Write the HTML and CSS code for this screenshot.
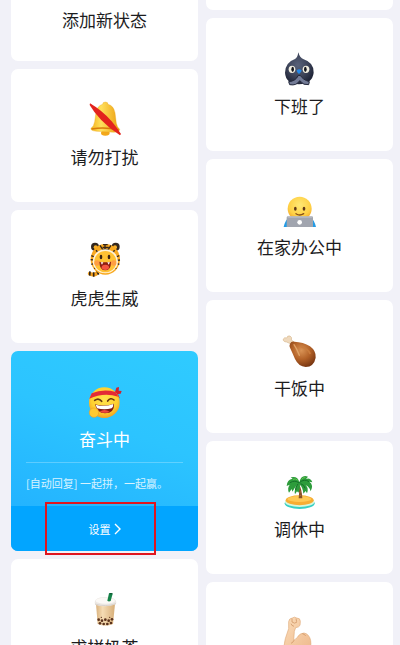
FILE: index.html
```html
<!DOCTYPE html>
<html lang="zh-CN">
<head>
    <meta charset="UTF-8">
    <meta name="viewport" content="width=device-width, initial-scale=1.0">
    <title>添加新状态</title>
    <link rel="stylesheet" href="styles.css">
</head>
<body>
    <main class="status-grid">
        <div class="column">
            <button type="button" class="card card-add">
                <span class="card-title">添加新状态</span>
            </button>

            <button type="button" class="card">
                <!-- bell, muted -->
                <svg class="icon" viewBox="18 21 108 108" aria-hidden="true">
                    <defs>
                        <linearGradient id="bell" x1="0" y1="0" x2="1" y2="0">
                            <stop offset="0" stop-color="#f5b21c"/>
                            <stop offset=".35" stop-color="#ffe05c"/>
                            <stop offset="1" stop-color="#eb9d0e"/>
                        </linearGradient>
                    </defs>
                    <ellipse cx="73" cy="117" rx="13" ry="8" fill="#f3a81a"/>
                    <path d="M65 31 Q65 24 73 24 Q81 24 81 31 Q98 35 102 56 L106 88 Q108 99 116 106 Q116 114 98 115 L46 112 Q28 110 30 103 Q39 96 41 83 L45 55 Q49 35 65 31Z" fill="url(#bell)" stroke="#eaa51c" stroke-width="1"/>
                    <path d="M32 105 Q72 98 113 108" fill="none" stroke="#d87c0c" stroke-width="4"/>
                    <path d="M27 28 Q64 50 92 82 Q107 100 120 120 L117 124 Q86 104 60 77 Q38 54 26 33Z" fill="#e3231d"/>
                </svg>
                <span class="card-title">请勿打扰</span>
            </button>

            <button type="button" class="card">
                <!-- tiger hood face -->
                <svg class="icon" viewBox="18 24 108 108" aria-hidden="true">
                    <path d="M51 113 Q44 127 26 119" fill="none" stroke="#f5a11b" stroke-width="11" stroke-linecap="round"/>
                    <path d="M27 112l-1 13M38 115v13M47 110l6 12" stroke="#2d2117" stroke-width="5"/>
                    <circle cx="42" cy="38" r="12" fill="#32271f"/>
                    <circle cx="104" cy="38" r="12" fill="#32271f"/>
                    <circle cx="44" cy="40" r="6" fill="#f8b12b"/>
                    <circle cx="102" cy="40" r="6" fill="#f8b12b"/>
                    <ellipse cx="73" cy="76" rx="44" ry="46" fill="#f9a920"/>
                    <path d="M57 34l8 12h17l8-12M66 32h14M65 40h18M72 31v13M31 65l10 4M29 77l10 1M31 91l9-3M115 65l-10 4M117 78l-10 1M115 91l-9-3M45 49l7 7M101 49l-7 7M40 104l7-6M106 104l-7-6" fill="none" stroke="#33251a" stroke-width="4"/>
                    <ellipse cx="73" cy="82" rx="38" ry="36" fill="#fff4dc"/>
                    <ellipse cx="73" cy="83" rx="33" ry="32" fill="#ffc234"/>
                    <circle cx="48" cy="87" r="8" fill="#ff9e43"/>
                    <circle cx="98" cy="87" r="8" fill="#ff9e43"/>
                    <ellipse cx="60" cy="69" rx="4" ry="7" fill="#3b2414"/>
                    <ellipse cx="84" cy="69" rx="4" ry="7" fill="#3b2414"/>
                    <path d="M55 83 Q73 86 90 83 Q90 109 73 109 Q56 109 55 83Z" fill="#8f1d12"/>
                    <ellipse cx="73" cy="100" rx="11" ry="8" fill="#f45440"/>
                    <path d="M59 85h8l-4 7zM79 85h8l-4 7z" fill="#fff"/>
                </svg>
                <span class="card-title">虎虎生威</span>
            </button>

            <section class="card card-active">
                <div class="active-body">
                    <!-- laughing face with headband -->
                    <svg class="icon" viewBox="20 15 108 108" aria-hidden="true">
                        <defs>
                            <radialGradient id="face" cx=".5" cy=".4" r=".6">
                                <stop offset="0" stop-color="#ffe34d"/>
                                <stop offset=".7" stop-color="#ffd02f"/>
                                <stop offset="1" stop-color="#f0a022"/>
                            </radialGradient>
                        </defs>
                        <path d="M104 42l4-13 8-2-1 11 9 1-3 8-8 1 5 12-8 3-10-13z" fill="#d3202e"/>
                        <circle cx="72" cy="74" r="46" fill="url(#face)"/>
                        <path d="M34 46 Q68 32 106 42 L114 56 Q70 42 27 62Z" fill="#e32a36"/>
                        <path d="M43 67 Q55 58 64 70M82 69 Q91 57 101 66" fill="none" stroke="#68360e" stroke-width="5" stroke-linecap="round"/>
                        <path d="M44 79 Q71 87 101 77 Q103 105 74 106 Q50 106 44 79Z" fill="#801c12"/>
                        <path d="M46 80 Q72 88 99 78 Q99 87 94 91 Q72 97 50 91Z" fill="#fff"/>
                        <path d="M58 101 Q72 91 88 101 Q74 108 58 101Z" fill="#ee483e"/>
                        <circle cx="41" cy="104" r="14" fill="#ffca32" stroke="#ef9e25" stroke-width="2"/>
                    </svg>
                    <h2 class="card-title">奋斗中</h2>
                    <p class="reply">[自动回复] 一起拼，一起赢。</p>
                </div>
                <div class="active-footer">
                    <button type="button" class="settings-btn">
                        设置
                        <svg class="chevron" viewBox="0 0 7 12" aria-hidden="true">
                            <path d="M1 1l5 5-5 5" fill="none" stroke="#fff" stroke-width="1.4"/>
                        </svg>
                    </button>
                    <span class="highlight"></span>
                </div>
            </section>

            <button type="button" class="card">
                <!-- bubble tea -->
                <svg class="icon" viewBox="48 33 108 108" aria-hidden="true">
                    <defs>
                        <linearGradient id="tea" x1="0" y1="0" x2="1" y2="0">
                            <stop offset="0" stop-color="#d9b17d"/>
                            <stop offset=".35" stop-color="#f5dcb4"/>
                            <stop offset="1" stop-color="#d7ae78"/>
                        </linearGradient>
                    </defs>
                    <path d="M75 72h57l-6 60q-23 10-46 0z" fill="url(#tea)"/>
                    <g fill="#5a321d">
                        <circle cx="83" cy="119" r="4"/><circle cx="93" cy="122" r="4"/><circle cx="103" cy="119" r="4"/>
                        <circle cx="113" cy="122" r="4"/><circle cx="123" cy="118" r="4"/><circle cx="87" cy="130" r="4"/>
                        <circle cx="98" cy="132" r="4"/><circle cx="109" cy="132" r="4"/><circle cx="120" cy="129" r="4"/>
                        <circle cx="91" cy="112" r="2"/><circle cx="116" cy="112" r="2"/>
                    </g>
                    <path d="M71 66 Q73 51 103 52 Q134 51 136 66 L135 73 Q103 84 72 74Z" fill="#ece8e4"/>
                    <ellipse cx="103" cy="62" rx="29" ry="9" fill="#fbf9f6"/>
                    <path d="M72 72 Q103 82 135 71" fill="none" stroke="#cfc7bf" stroke-width="2"/>
                    <path d="M114 40 Q120 37 125 41 L119 63 Q113 66 109 62Z" fill="#16834a"/>
                    <ellipse cx="120" cy="41" rx="5" ry="2" fill="#0b5730"/>
                </svg>
                <span class="card-title">求拼奶茶</span>
            </button>
        </div>

        <div class="column">
            <div class="card card-end"></div>

            <button type="button" class="card">
                <!-- dark round bird -->
                <svg class="icon" viewBox="20 15 108 108" aria-hidden="true">
                    <defs>
                        <radialGradient id="bird" cx=".45" cy=".4" r=".6">
                            <stop offset="0" stop-color="#59627a"/>
                            <stop offset=".6" stop-color="#3d4459"/>
                            <stop offset="1" stop-color="#202538"/>
                        </radialGradient>
                    </defs>
                    <path d="M69 22 Q73 38 85 43 Q116 53 115 83 Q111 116 71 118 Q31 116 29 83 Q30 52 59 42 Q67 37 69 22Z" fill="url(#bird)"/>
                    <ellipse cx="50" cy="73" rx="10" ry="11" fill="#f1eee0"/>
                    <ellipse cx="92" cy="73" rx="10" ry="11" fill="#f1eee0"/>
                    <ellipse cx="52" cy="73" rx="4" ry="8" fill="#14161e"/>
                    <ellipse cx="90" cy="73" rx="4" ry="8" fill="#14161e"/>
                    <path d="M64 76 Q71 70 79 76 Q78 83 71 87 Q64 82 64 76Z" fill="#2689e7"/>
                    <path d="M68 92 Q62 108 40 110 L43 119 Q64 123 73 107 Q85 122 100 119 L102 110 Q82 104 75 91Z" fill="#737b96" stroke="#24293c" stroke-width="3"/>
                </svg>
                <span class="card-title">下班了</span>
            </button>

            <button type="button" class="card">
                <!-- face behind laptop -->
                <svg class="icon" viewBox="20 3 108 108" aria-hidden="true">
                    <defs>
                        <radialGradient id="smile" cx=".5" cy=".35" r=".65">
                            <stop offset="0" stop-color="#ffe875"/>
                            <stop offset=".7" stop-color="#ffd044"/>
                            <stop offset="1" stop-color="#f2a62d"/>
                        </radialGradient>
                    </defs>
                    <path d="M40 83 Q29 91 25 111 L122 111 Q117 90 107 83Z" fill="#239be5"/>
                    <circle cx="73" cy="56" r="36" fill="url(#smile)"/>
                    <ellipse cx="60" cy="56" rx="4" ry="6" fill="#613816"/>
                    <ellipse cx="86" cy="56" rx="4" ry="6" fill="#613816"/>
                    <path d="M62 71 Q73 79 85 71" fill="none" stroke="#895016" stroke-width="4" stroke-linecap="round"/>
                    <rect x="34" y="79" width="79" height="34" rx="4" fill="#a1a5af"/>
                    <path d="M37 81h73" stroke="#c4c7d0" stroke-width="3"/>
                    <circle cx="73" cy="97" r="7" fill="#fff"/>
                </svg>
                <span class="card-title">在家办公中</span>
            </button>

            <button type="button" class="card">
                <!-- drumstick -->
                <svg class="icon" viewBox="20 12 108 108" aria-hidden="true">
                    <defs>
                        <radialGradient id="meat" cx=".45" cy=".35" r=".7">
                            <stop offset="0" stop-color="#d99355"/>
                            <stop offset=".5" stop-color="#b36228"/>
                            <stop offset="1" stop-color="#743310"/>
                        </radialGradient>
                    </defs>
                    <path d="M47 48 L34 42 Q22 41 24 33 Q27 27 34 30 Q36 22 44 24 Q51 27 48 36 L60 45Z" fill="#efd9bd" stroke="#d8b991" stroke-width="2"/>
                    <path d="M44 47 Q48 39 57 41 Q84 42 104 55 Q123 69 121 89 Q116 116 91 117 Q70 116 59 93 Q52 76 44 59 Q41 53 44 47Z" fill="url(#meat)"/>
                    <path d="M56 50 Q64 61 72 82" fill="none" stroke="#e0a468" stroke-width="4" stroke-linecap="round"/>
                    <path d="M79 57 Q98 63 104 76" fill="none" stroke="#c97c3d" stroke-width="5" stroke-linecap="round"/>
                </svg>
                <span class="card-title">干饭中</span>
            </button>

            <button type="button" class="card">
                <!-- palm island -->
                <svg class="icon" viewBox="20 15 108 108" aria-hidden="true">
                    <ellipse cx="73" cy="106" rx="45" ry="17" fill="#36cfc3"/>
                    <ellipse cx="73" cy="102" rx="44" ry="15" fill="#d5f7df"/>
                    <ellipse cx="73" cy="97" rx="42" ry="15" fill="#f7ad32"/>
                    <ellipse cx="72" cy="93" rx="36" ry="9" fill="#ffc954"/>
                    <path d="M71 48 Q80 65 81 91 L70 91 Q74 67 66 51Z" fill="#875027"/>
                    <path d="M75 62l-5 3M77 71l-5 3M78 81l-6 3" stroke="#b97b45" stroke-width="2"/>
                    <path d="M72 43 Q67 22 46 28 L52 32 Q35 34 34 54 L43 50 Q35 61 41 74 L49 63 L51 71 Q59 55 67 50 Q55 62 59 79 L65 70 L69 74 Q76 60 73 50 Q82 56 84 77 L91 69 L95 76 Q101 60 91 52 Q102 56 106 70 Q116 51 102 41 L111 43 Q105 28 92 33 L98 26 Q78 18 72 43Z" fill="#2d9c3b"/>
                    <path d="M71 45 Q59 35 44 44M72 44 Q87 31 101 41M68 48 Q60 57 61 66M76 47 Q87 50 89 61" fill="none" stroke="#157129" stroke-width="3"/>
                    <path d="M67 36 Q60 31 53 34M79 34 Q83 28 90 29" fill="none" stroke="#62c44f" stroke-width="3"/>
                </svg>
                <span class="card-title">调休中</span>
            </button>

            <div class="card">
                <!-- flexed arm -->
                <svg class="icon" viewBox="35 114 108 108" aria-hidden="true">
                    <defs>
                        <linearGradient id="arm" x1="0" y1="0" x2="1" y2="1">
                            <stop offset="0" stop-color="#fbdcb9"/>
                            <stop offset="1" stop-color="#eeb98c"/>
                        </linearGradient>
                    </defs>
                    <path d="M55 137 Q56 127 66 126 Q72 121 79 126 Q90 126 90 136 L89 148 Q86 154 76 155 L72 166 L70 193 Q76 190 80 185 Q88 171 101 171 Q117 174 121 194 Q124 216 113 224 H43 Q39 209 45 188 L55 158Z" fill="url(#arm)" stroke="#dfaa7a" stroke-width="2"/>
                    <path d="M65 128v10q8 7 15 0M77 128l2 9M71 151q-8-2-9-8M71 193q-3 7-9 9M96 173q7 1 10 7" fill="none" stroke="#c98c5b" stroke-width="2"/>
                </svg>
            </div>
        </div>
    </main>
</body>
</html>
```
FILE: styles.css
```css
* {
    box-sizing: border-box;
}

body {
    margin: 0;
    height: 100vh;
    overflow: hidden;
    background: #f1f1f8;
    color: #1c1c1e;
    font-family: "Noto Sans CJK SC", sans-serif;
}

button {
    border: none;
    font-family: inherit;
    color: inherit;
    cursor: pointer;
}

.status-grid {
    display: grid;
    grid-template-columns: 1fr 1fr;
    gap: 8px;
    padding: 0 7px 0 11px;
}

.column {
    display: flex;
    flex-direction: column;
    gap: 8px;
}

.card {
    display: flex;
    flex-direction: column;
    align-items: center;
    gap: 8px;
    min-height: 133px;
    padding: 32px 12px;
    background: #fff;
    border-radius: 7px;
}

/* cards scrolled partly past the top edge */
.card-add {
    min-height: 0;
    padding: 8px 12px 29px;
    border-radius: 0 0 7px 7px;
}

.card-end {
    min-height: 0;
    padding: 5px;
    border-radius: 0 0 7px 7px;
}

.icon {
    width: 36px;
    height: 36px;
    flex-shrink: 0;
}

.card-title {
    margin: 0;
    font-size: 17px;
    line-height: 24px;
    font-weight: 400;
}

.card-active {
    align-items: stretch;
    gap: 0;
    padding: 0;
    color: #fff;
    background: linear-gradient(200deg, #2fcbff 0%, #2cc4ff 40%, #20adff 100%);
}

.active-body {
    display: flex;
    flex-direction: column;
    align-items: center;
    gap: 8px;
    padding: 32px 15px 13px;
}

.reply {
    align-self: stretch;
    margin: 3px 0 0;
    padding-top: 10px;
    border-top: 1px solid rgba(255, 255, 255, 0.25);
    font-size: 11px;
    line-height: 20px;
    white-space: nowrap;
    color: #d8f3ff;
}

.active-footer {
    position: relative;
    background: #02a5ff;
    border-radius: 0 0 7px 7px;
}

.settings-btn {
    display: flex;
    align-items: center;
    justify-content: center;
    gap: 3px;
    width: 100%;
    height: 45px;
    padding: 0;
    background: none;
    font-size: 11px;
    line-height: 20px;
}

.chevron {
    width: 7px;
    height: 12px;
}

.highlight {
    position: absolute;
    top: -4px;
    bottom: -4px;
    left: 34px;
    width: 111px;
    border: 2px solid #e0151f;
    pointer-events: none;
}
```
